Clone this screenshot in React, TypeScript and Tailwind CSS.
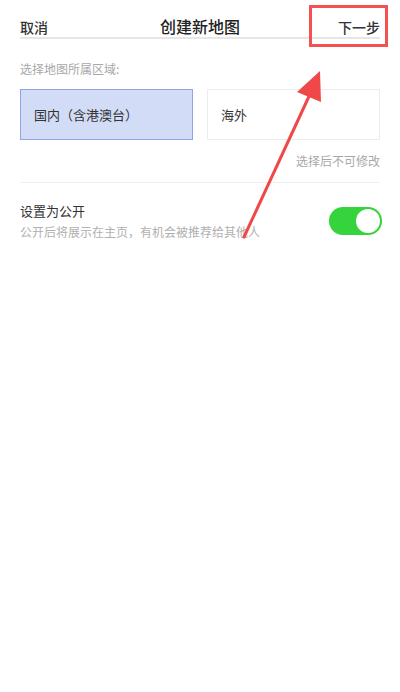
import { useState } from 'react'

const FONT = { fontFamily: '"Noto Sans CJK SC", "Noto Sans", sans-serif' }

const REGIONS = ['国内（含港澳台）', '海外']

export default function App() {
  const [region, setRegion] = useState(0)
  const [isPublic, setIsPublic] = useState(true)

  return (
    <div className="relative w-[400px] h-[692px] bg-white overflow-hidden" style={FONT}>

      {/* Header */}
      <div className="mx-5 h-[39px] pt-[16px] grid grid-cols-[1fr_auto_1fr] items-center border-b-2 border-[#e6e6e6]">
        <span className="text-[14px] font-medium text-[#333]">取消</span>
        <span className="text-[16px] font-medium text-[#222] -mt-[2px]">创建新地图</span>
        <span className="text-[14px] font-medium text-[#333] text-right">下一步</span>
      </div>

      {/* Region picker */}
      <div className="px-5">
        <p className="mt-[22px] text-[12px] leading-[16px] text-[#a8a8a8]">选择地图所属区域:</p>
        <div className="mt-[12px] grid grid-cols-2 gap-[14px]">
          {REGIONS.map((name, i) => (
            <button
              key={name}
              onClick={() => setRegion(i)}
              className={`h-[51px] text-left pl-[13px] text-[13px] text-[#333] border ${
                region === i ? 'bg-[#d2dcf6] border-[#8ea5e9]' : 'bg-white border-[#ececec]'
              }`}
            >
              {name}
            </button>
          ))}
        </div>
        <p className="mt-[13px] text-right text-[12px] leading-[16px] text-[#a8a8a8]">选择后不可修改</p>
        <div className="mt-[13px] border-t border-[#f0f0f0]" />

        {/* Public switch */}
        <div className="mt-[19px] flex items-center justify-between">
          <div>
            <p className="text-[13px] leading-[18px] text-[#333]">设置为公开</p>
            <p className="mt-[4px] text-[12px] leading-[16px] text-[#b0b0b0]">公开后将展示在主页，有机会被推荐给其他人</p>
          </div>
          <button
            onClick={() => setIsPublic(v => !v)}
            className={`-mr-[2px] w-[53px] h-[28px] rounded-full p-[2px] flex ${
              isPublic ? 'bg-[#35d33c] justify-end' : 'bg-[#e5e5e5] justify-start'
            }`}
          >
            <span className="w-[24px] h-[24px] rounded-full bg-white" />
          </button>
        </div>
      </div>

      {/* Annotation: highlight box and arrow */}
      <div className="absolute left-[309px] top-[5px] w-[79px] h-[42px] border-[3px] border-[#f25252]" />
      <svg className="absolute left-0 top-0" width="400" height="692" viewBox="0 0 400 692">
        <line x1="244" y1="237" x2="311" y2="92" stroke="#f04848" strokeWidth="3" strokeLinecap="round" />
        <polygon points="320,71 297,92 321,102" fill="#f04848" />
      </svg>
    </div>
  )
}
